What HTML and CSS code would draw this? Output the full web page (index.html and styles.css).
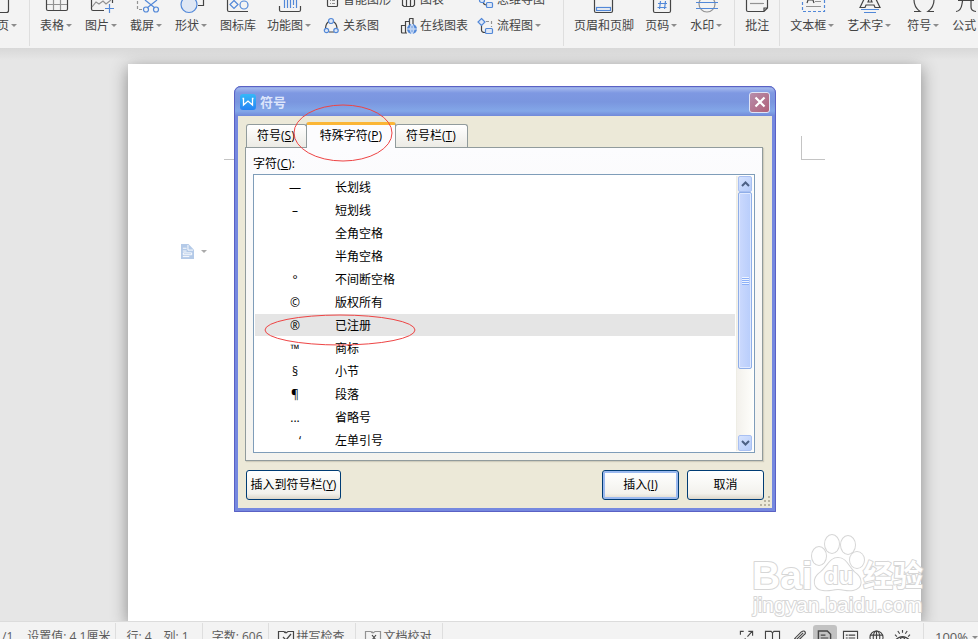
FILE: index.html
```html
<!DOCTYPE html>
<html lang="zh-CN">
<head>
<meta charset="utf-8">
<title>符号</title>
<link rel="stylesheet" href="styles.css">
</head>
<body>
<div class="app">
  <header class="ribbon">
    <div class="group first">
      <button class="tool"><svg class="big" viewBox="0 0 24 24"><path class="k" d="M4 1H18.500V21.500Q18.500 23.500 16.500 23.500H6Q4 23.500 4 21.500Z"/></svg><span class="drop">分页</span></button>
    </div>
    <div class="group">
      <button class="tool"><svg class="big" viewBox="0 0 24 24"><path class="g" d="M1 15.500H23M8.500 3V21M15.500 3V21"/><path class="k" d="M1.500 2V20Q1.500 21.500 3 21.500H21Q22.500 21.500 22.500 20V2Z"/></svg><span class="drop">表格</span></button>
      <button class="tool"><svg class="big" viewBox="0 0 24 24"><path class="k" d="M14 21.500H3Q1.500 21.500 1.500 20V2H22.500V14"/><path class="g" d="M2 18L6 13L9 15L13 12L16 15L21 11"/><path class="b" d="M19.500 15V24M15 19.500H24"/></svg><span class="drop">图片</span></button>
      <button class="tool"><svg class="big" viewBox="0 0 24 24"><path class="g dash" d="M2.500 2V20.500H8"/><path class="b" d="M10 11L20 19M22 11L12 19"/><circle class="b" cx="11" cy="20.500" r="2.500"/><circle class="b" cx="21" cy="20.500" r="2.500"/></svg><span class="drop">截屏</span></button>
      <button class="tool"><svg class="big" viewBox="0 0 24 24"><path class="k" d="M8 2H23.500V16.500H18"/><circle class="b fill" cx="9" cy="15.500" r="8"/></svg><span class="drop">形状</span></button>
      <button class="tool"><svg class="big" viewBox="0 0 24 24"><path class="k" d="M22 2H1.500V21Q1.500 22.500 3 22.500H22"/><path class="b" d="M8 11.500L12 15.500L8 19.500L4 15.500Z"/><circle class="b" cx="18" cy="16" r="4"/></svg><span>图标库</span></button>
      <button class="tool"><svg class="big" viewBox="0 0 24 24"><path class="k" d="M1.500 17V21Q1.500 22.500 3 22.500H21Q22.500 22.500 22.500 21V17"/><path class="b" d="M6.500 5V19M9.500 5V19M12.500 5V19M15.500 5V16M15.500 18V19M18.500 5V19"/></svg><span class="drop">功能图</span></button>
      <div class="charts">
        <button class="mini"><svg viewBox="0 0 16 16"><rect class="k" x="3.500" y="1.500" width="10" height="13" rx="1"/><path class="g" d="M6 8.500H7M8 8.500H11M6 11.500H7M8 11.500H11"/></svg><span>智能图形</span></button>
        <button class="mini"><svg viewBox="0 0 16 16"><path class="k" d="M1.500 14V6H5.500V14.500M5.500 14V2H9.500V14.500M9.500 14V4H13.500V13L12 14.500H3L1.500 13"/></svg><span>图表</span></button>
        <button class="mini"><svg viewBox="0 0 16 16"><path class="k" d="M5 9Q5 13 9 13"/><rect class="b fill" x="1.500" y="6.500" width="5" height="4" rx="2"/><rect class="b fill" x="8.500" y="10.500" width="6" height="5" rx="1"/></svg><span>思维导图</span></button>
        <button class="mini"><svg viewBox="0 0 16 16"><path class="k" d="M5 3.500Q2 5 1.500 10M9 3.500Q12.500 5 13 10M5 14H10"/><circle class="b fill" cx="7" cy="3" r="2.500"/><circle class="b fill" cx="2.500" cy="12.500" r="2.200"/><circle class="b fill" cx="12" cy="12.500" r="2.200"/></svg><span>关系图</span></button>
        <button class="mini"><svg viewBox="0 0 16 16"><path class="k" d="M6 15H1.500Q.5 15 .5 14V7.500H4.500V15M4.500 7V3.500H8.500V15M8.500 4V1Q8.500.5 9 .5H12V7"/><circle class="bluefill" cx="11" cy="11" r="5"/><path class="w" d="M6 11H16M11 6V16M11 6Q7 11 11 16M11 6Q15 11 11 16"/></svg><span>在线图表</span></button>
        <button class="mini"><svg viewBox="0 0 16 16"><path class="g dash" d="M8 3.500H13.500V9"/><path class="k" d="M3.500 7V12Q3.500 14.500 7 14.500"/><path class="b fill" d="M3.500.5L7 4L3.500 7.500L0 4Z"/><rect class="b fill" x="7.500" y="10.500" width="7" height="5" rx="1"/></svg><span class="drop">流程图</span></button>
      </div>
    </div>
    <div class="group">
      <button class="tool"><svg class="big" viewBox="0 0 24 24"><path class="k" d="M2.500 1H20.500V22Q20.500 23.500 19 23.500H4Q2.500 23.500 2.500 22Z"/><rect class="b" x="4.500" y="18.500" width="14" height="3"/></svg><span>页眉和页脚</span></button>
      <button class="tool"><svg class="big" viewBox="0 0 24 24"><path class="k" d="M3.500 2H20.500V22Q20.500 23.500 19 23.500H5Q3.500 23.500 3.500 22Z"/><path class="b" d="M10.500 12L9.500 20M15.500 12L14.500 20M8 14.500H17M7.500 18.500H16.500"/></svg><span class="drop">页码</span></button>
      <button class="tool"><svg class="big" viewBox="0 0 24 24"><circle class="g" cx="12" cy="15" r="8"/><path class="b" d="M1 13.500H23M1 19.500H23"/></svg><span class="drop">水印</span></button>
    </div>
    <div class="group">
      <button class="tool"><svg class="big" viewBox="0 0 24 24"><path class="k" d="M1.500 3H22.500V19L19 22.500H3Q1.500 22.500 1.500 21ZM19 22V19H22"/><path class="g" d="M5 14.500H19"/></svg><span>批注</span></button>
    </div>
    <div class="group">
      <button class="tool"><svg class="big" viewBox="0 0 24 24"><path class="b dash" d="M1.500 3V22.500H23.500V3"/><path class="k" d="M6 14L9.500 4L13 14M7 11H12"/><path class="g" d="M14 12.500H20M5 17.500H20"/></svg><span class="drop">文本框</span></button>
      <button class="tool"><svg class="big" viewBox="0 0 24 24"><path class="k" d="M2 18.500L9 4H15L22 18.500H17L16 16H8L7 18.500ZM10 13H14L12 8Z"/><path class="b" d="M3 20.500H21M6 23.500H18"/></svg><span class="drop">艺术字</span></button>
      <div class="formula">
        <button class="tool"><svg class="big" viewBox="0 0 24 24"><path class="k" d="M2 22.500H8Q2 18 2 11Q2 2 12 2Q22 2 22 11Q22 18 16 22.500H22"/></svg><span class="drop">符号</span></button>
        <button class="tool"><svg class="big" viewBox="0 0 24 24"><path class="k" d="M4 22.500Q9 22 10 15L12 3M6 11.500H22M19 12V18Q19 22 24 22.500"/></svg><span>公式</span></button>
      </div>
    </div>
  </header>

  <main class="workspace">
    <div class="page">
      <div class="left-mark"></div>
      <div class="right-mark"></div>
      <button class="page-menu" aria-label="粘贴选项"><svg viewBox="0 0 14 16"><path d="M0 0H8L14 6V16H0Z" fill="#b4cae8"/><path d="M7.500 1V6.500H13M2 4.500H6M2 7.500H6M2 13.500H9M2.500 9.500H11.500V11.500H2.500Z" fill="none" stroke="#fff"/></svg><i class="arrow"></i></button>
    </div>
  </main>

  <footer class="status">
    <div class="cell page-no">/1</div>
    <div class="cell ruled measure">设置值: 4.1厘米</div>
    <div class="cell position"><span>行: 4</span><span>列: 1</span></div>
    <div class="cell ruled words">字数: 606</div>
    <button class="cell ruled"><svg viewBox="0 0 16 16"><path class="k" d="M7 2.500L8 4L10 2.500H15.500V14.500H.5V2.500H6L7 4M5 8L8 11L13 5"/></svg>拼写检查</button>
    <button class="cell ruled"><svg viewBox="0 0 16 16"><path class="g" d="M7 2.500L8 4L10 2.500H15.500V14.500H.5V2.500H6L7 4"/><path class="k" d="M7 6L11 11M11 6L7 11"/></svg>文档校对</button>
    <div class="views">
      <button aria-label="全屏"><svg viewBox="0 0 16 16"><path class="k" d="M1.500 5V1.500H5M9 7L14 1.500M10 1.500H14.500V6M14.500 11V14.500H11M7 9L2 14.500M1.500 10V14.500H6"/></svg></button>
      <button aria-label="阅读"><svg viewBox="0 0 16 16"><path class="k" d="M.5 1.500H6.500L8 3L9.500 1.500H15.500V13.500H.5ZM8 3V14"/></svg></button>
      <button aria-label="书写"><svg viewBox="0 0 16 16"><path class="k" d="M2 15L4 9L11 2Q14 0 15 2Q16 4 14 5L7 12ZM4 9L7 12M6 10L13 3"/></svg></button>
      <button class="on" aria-label="页面"><svg viewBox="0 0 16 16"><path class="k thick" d="M1.500 1H11L14.500 4.500V15H1.500Z"/><path class="k" d="M4 5.500H9M4 8.500H12M4 11.500H12"/></svg></button>
      <button aria-label="大纲"><svg viewBox="0 0 16 16"><path class="k" d="M.5 1.500H15.500V15H.5ZM3 5.500H5M6 5.500H13M3 8.500H5M6 8.500H13M3 11.500H5M6 11.500H13"/></svg></button>
      <button aria-label="网页"><svg viewBox="0 0 16 16"><circle class="k" cx="8" cy="8" r="7"/><ellipse class="k" cx="8" cy="8" rx="3.500" ry="7"/><path class="k" d="M8 1V15M1 5.500H15M1 10.500H15"/></svg></button>
      <button aria-label="护眼"><svg viewBox="0 0 16 16"><path class="k" d="M0 11Q8 3 16 11Q8 17 0 11M8 0V3M3 1L5 4M13 1L11 4M0 5L2 7M16 5L14 7"/><circle class="k" cx="8" cy="10.500" r="2.500"/></svg></button>
    </div>
    <button class="zoom">100%<i class="arrow"></i></button>
  </footer>

  <section class="dialog" role="dialog" aria-labelledby="dialog-title">
    <div class="titlebar">
      <svg class="logo" viewBox="0 0 16 16"><defs><linearGradient id="lg" x2="0" y2="1"><stop stop-color="#35b8f8"/><stop offset="1" stop-color="#2584f4"/></linearGradient></defs><rect width="16" height="16" rx="3" fill="url(#lg)"/><path d="M2.500 4.500H3.500V11L8 7L12.500 11V4.500H13.500" fill="none" stroke="#fff" stroke-width="1.300"/></svg>
      <h1 id="dialog-title">符号</h1>
      <button class="close" aria-label="关闭"><svg viewBox="0 0 12 12"><path d="M1.500 1.500L10.500 10.500M10.500 1.500L1.500 10.500" stroke="#fff" stroke-width="2.200"/></svg></button>
    </div>
    <div class="content">
      <div class="tabs" role="tablist">
        <button role="tab">符号(<u>S</u>)</button>
        <button role="tab" class="active" aria-selected="true">特殊字符(<u>P</u>)</button>
        <button role="tab">符号栏(<u>T</u>)</button>
      </div>
      <div class="panel">
        <div class="caption" id="list-label">字符(<u>C</u>):</div>
        <div class="listbox">
          <ul role="listbox" aria-labelledby="list-label">
            <li role="option"><span>—</span>长划线</li>
            <li role="option"><span>–</span>短划线</li>
            <li role="option"><span></span>全角空格</li>
            <li role="option"><span></span>半角空格</li>
            <li role="option"><span>°</span>不间断空格</li>
            <li role="option"><span>©</span>版权所有</li>
            <li role="option" class="selected" aria-selected="true"><span>®</span>已注册</li>
            <li role="option"><span>™</span>商标</li>
            <li role="option"><span>§</span>小节</li>
            <li role="option"><span>¶</span>段落</li>
            <li role="option"><span>...</span>省略号</li>
            <li role="option"><span class="quote">‘</span>左单引号</li>
          </ul>
          <div class="scroll">
            <button aria-label="向上"><svg viewBox="0 0 9 6"><path d="M1 5L4.500 1.500L8 5"/></svg></button>
            <div class="track"><div class="thumb"><i></i></div></div>
            <button aria-label="向下"><svg viewBox="0 0 9 6"><path d="M1 1L4.500 4.500L8 1"/></svg></button>
          </div>
        </div>
      </div>
      <div class="actions">
        <button class="action add">插入到符号栏(<u>Y</u>)</button>
        <button class="action primary">插入(<u>I</u>)</button>
        <button class="action">取消</button>
      </div>
    </div>
    <svg class="grip" viewBox="0 0 11 11"><path d="M8 0h2v2h-2zM8 4h2v2h-2zM4 4h2v2h-2zM8 8h2v2h-2zM4 8h2v2h-2zM0 8h2v2h-2z" fill="#b8b4a2"/></svg>
    <svg class="ring tab-ring" viewBox="0 0 100 58"><ellipse cx="50" cy="29" rx="49" ry="28"/></svg>
    <svg class="ring row-ring" viewBox="0 0 152 32"><ellipse cx="76" cy="16" rx="75" ry="15"/></svg>
  </section>

  <svg class="watermark" viewBox="0 0 180 90">
    <g class="halo">
      <ellipse cx="69" cy="26" rx="7" ry="9"/><ellipse cx="82" cy="14" rx="7" ry="9"/><ellipse cx="98" cy="15" rx="7" ry="9"/><ellipse cx="107" cy="30" rx="7" ry="8"/>
      <path d="M88 28C80 28 78 36 71 42C62 48 63 59 73 60C80 61 82 59 88 59C94 59 96 61 103 60C113 58 113 48 104 42C98 36 96 28 88 28Z"/>
      <text class="brand" x="2" y="59">Bai</text>
      <text class="du" x="74" y="54">du</text>
      <text class="exp" x="113" y="56">经验</text>
      <text class="site" x="3" y="82">jingyan.baidu.com</text>
    </g>
  </svg>
</div>
</body>
</html>
```

FILE: styles.css
```css
* { box-sizing: border-box; }
body { margin: 0; overflow: hidden; font: 12px/18px "Open Sans", "Noto Sans CJK SC", sans-serif; color: #444; }
button { margin: 0; padding: 0; border: 0; background: none; font: inherit; color: inherit; white-space: nowrap; }
svg { display: block; flex: none; overflow: visible; }
.k, .g, .b, .w { fill: none; stroke: #444; stroke-width: 1.2; }
.g { stroke: #929292; }
.b { stroke: #5288d8; }
.w { stroke: #dce8fa; stroke-width: 1; }
.fill { fill: #dfe7f4; }
.bluefill { fill: #5288d8; }
.thick { stroke-width: 1.5; }
.dash { stroke-dasharray: 3 2; }

.app { position: relative; display: flex; flex-direction: column; height: calc(100vh + 12px); }

/* ribbon */
.ribbon { display: flex; align-items: flex-end; flex: none; height: 48px; overflow: hidden; background: #f3f3f3; }
.group { display: flex; flex: none; align-items: flex-end; gap: 11px; height: 60px; padding: 0 10px 11px 11px; border-right: 1px solid #dedede; margin-bottom: 2px; }
.group + .group { padding-left: 10px; }
.group:last-child { border: 0; }
.first { margin-left: -26px; }
.tool { display: flex; flex-direction: column; align-items: center; gap: 4px; }
.big { width: 24px; height: 24px; }
.drop::after, .arrow { content: ""; display: inline-block; border: 3px solid transparent; border-top-color: #8c8c8c; border-bottom: 0; vertical-align: 3px; }
.drop::after { margin: 0 2px; }
.formula { display: flex; gap: 11px; margin-left: 3px; }
.charts { display: grid; grid-template-columns: 77px 77px 75px; row-gap: 8px; }
.mini { display: flex; align-items: center; gap: 3px; }
.mini svg { width: 16px; height: 16px; }

/* document */
.workspace { display: flex; flex: 1; padding: 16px 57px 0 128px; overflow: hidden; background: linear-gradient(#d8d8d8, #e6e6e6 12px); }
.page { position: relative; flex: 1; background: #fff; box-shadow: 0 4px 16px #888; }
.left-mark { position: absolute; left: 96px; top: 95px; width: 24px; border-top: 1px solid #c4c4c4; }
.right-mark { position: absolute; right: 96px; top: 72px; width: 24px; height: 24px; border: solid #c4c4c4; border-width: 0 0 1px 1px; }
.page-menu { position: absolute; left: 53px; top: 180px; display: flex; align-items: center; gap: 7px; }
.page-menu svg { width: 13px; height: 15px; }
.page-menu .arrow { border-top-color: #aaa; }

/* status bar */
.status { display: flex; align-items: stretch; flex: none; height: 30px; padding-top: 1px; border-top: 1px solid #dcdcdc; background: #f3f3f3; color: #5c5c5c; }
.cell { display: flex; align-items: center; gap: 3px; padding: 0 10px 0 9px; }
.cell svg { width: 16px; height: 16px; }
.ruled { border-right: 1px solid #dedede; }
.page-no { padding: 0 14px 0 2px; }
.measure { padding: 0 5px 0 0; }
.position { gap: 12px; padding-right: 13px; padding-left: 10px; }
.words { padding-right: 5px; border-left: 1px solid #dedede; }
.views { display: flex; align-items: center; gap: 2px; margin-left: auto; padding-right: 8px; border-right: 1px solid #dedede; }
.views button { display: grid; place-items: center; width: 24px; height: 24px; border-radius: 3px; }
.views svg { width: 15px; height: 15px; }
.views .on { background: #c2c2c2; }
.zoom { padding: 0 0 0 11px; font-size: 13px; }
.zoom .arrow { margin-left: 4px; }

/* symbol dialog */
.dialog { position: absolute; left: 234px; top: 86px; display: flex; flex-direction: column; width: 542px; height: 426px; border: solid #7588df; border-width: 0 4px 4px; border-radius: 7px 7px 0 0; background: #ece9d8; color: #000; }
.dialog::after { content: ""; position: absolute; inset: 0 -4px -4px; border: 1px solid #5a61c4; border-radius: 7px 7px 0 0; pointer-events: none; }
.titlebar { display: flex; align-items: center; gap: 4px; flex: none; height: 30px; margin: 0 -4px; padding: 2px 6px 0; border-radius: 7px 7px 0 0; background: linear-gradient(#6a80d2, #a3b8ed 2px, #7e98e2 7px, #7a96df 16px, #83a7e8 25px, #7189d9); }
.logo { width: 16px; height: 16px; }
h1 { flex: 1; margin: 0; font: bold 13px/20px "Noto Sans CJK SC", sans-serif; color: #dce5fb; }
.close { display: grid; place-items: center; width: 21px; height: 21px; border: 1px solid #dfe4f6; border-radius: 3px; background: linear-gradient(135deg, #b78eac, #b06078); }
.close svg { width: 12px; height: 12px; }
.content { display: flex; flex-direction: column; flex: 1; padding: 7px 9px 8px 7px; }
.tabs { display: flex; align-items: flex-end; height: 24px; padding-left: 1px; }
.tabs button { height: 23px; padding: 0 11px 0 10px; border: 1px solid #919b9c; border-bottom: 0; border-radius: 3px 3px 0 0; background: linear-gradient(#fff, #ecebe5); }
.tabs .active { position: relative; height: 26px; margin: 0 -1px -1px; padding: 0 13px 1px; border-top: 3px solid #fbb636; background: #fcfcfe; }
.panel { display: flex; flex-direction: column; flex: 1; min-height: 0; padding: 7px; border: 1px solid #919b9c; background: linear-gradient(#fcfcfe, #f4f3ee); box-shadow: 1px 1px 1px #d0cdbd; }
.caption { height: 19px; }
.listbox { display: flex; flex: 1; min-height: 0; border: 1px solid #7f9db9; background: #fff; }
ul { flex: 1; margin: 0; padding: 1px 0 0 1px; list-style: none; overflow: hidden; }
li { display: flex; height: 22px; margin-bottom: 1px; line-height: 23px; }
li span { width: 80px; text-align: center; }
li .quote { padding-left: 10px; }
.selected { background: #e5e5e5; }
.scroll { display: flex; flex-direction: column; width: 17px; margin: 1px; border-left: 1px solid #eeede5; background: linear-gradient(90deg, #f3f1ec, #fefefb); }
.scroll button { display: grid; place-items: center; height: 16px; margin: 0 1px; border: 1px solid #a9c0f2; border-radius: 2px; background: linear-gradient(135deg, #d6e3fe, #b6ccfa); }
.scroll svg { width: 9px; height: 6px; fill: none; stroke: #4d6185; stroke-width: 2; }
.track { flex: 1; padding: 0 1px; }
.thumb { display: grid; place-items: center; height: 73%; border: 1px solid #8faee8; border-radius: 2px; background: linear-gradient(90deg, #cbd9fd, #b8cdfb); box-shadow: inset 0 0 0 1px #e1eaff; }
.thumb i { width: 7px; height: 8px; background: repeating-linear-gradient(#eef4fe 0 1px, #8cb0f8 1px 2px); }
.actions { display: flex; gap: 8px; padding: 9px 0 2px 1px; margin-right: -1px; }
.action { width: 77px; height: 30px; border: 1px solid #003c74; border-radius: 3px; background: linear-gradient(#fff, #f3f2ed 80%, #dcd7cb); }
.add { width: 95px; margin-right: auto; }
.primary { box-shadow: inset 0 0 0 2px #9bb9ef; }
.grip { position: absolute; right: 1px; bottom: 1px; width: 11px; height: 11px; }
.ring { position: absolute; pointer-events: none; fill: none; stroke: #ee4444; stroke-width: 1; }
.tab-ring { left: 55px; top: 18px; width: 100px; height: 58px; }
.row-ring { left: 26px; top: 228px; width: 152px; height: 32px; }

/* watermark */
.watermark { position: absolute; left: 750px; top: 530px; width: 180px; height: 90px; pointer-events: none; }
.halo { fill: #fff; stroke: #d6d6d6; stroke-width: 2; stroke-linejoin: round; paint-order: stroke; }
.brand { font: bold 39px "Liberation Sans", sans-serif; }
.du { font: bold 24px "Liberation Sans", sans-serif; }
.exp { font: bold 30px "Noto Sans CJK SC", sans-serif; }
.site { font: 21px "Liberation Sans", sans-serif; }
```
